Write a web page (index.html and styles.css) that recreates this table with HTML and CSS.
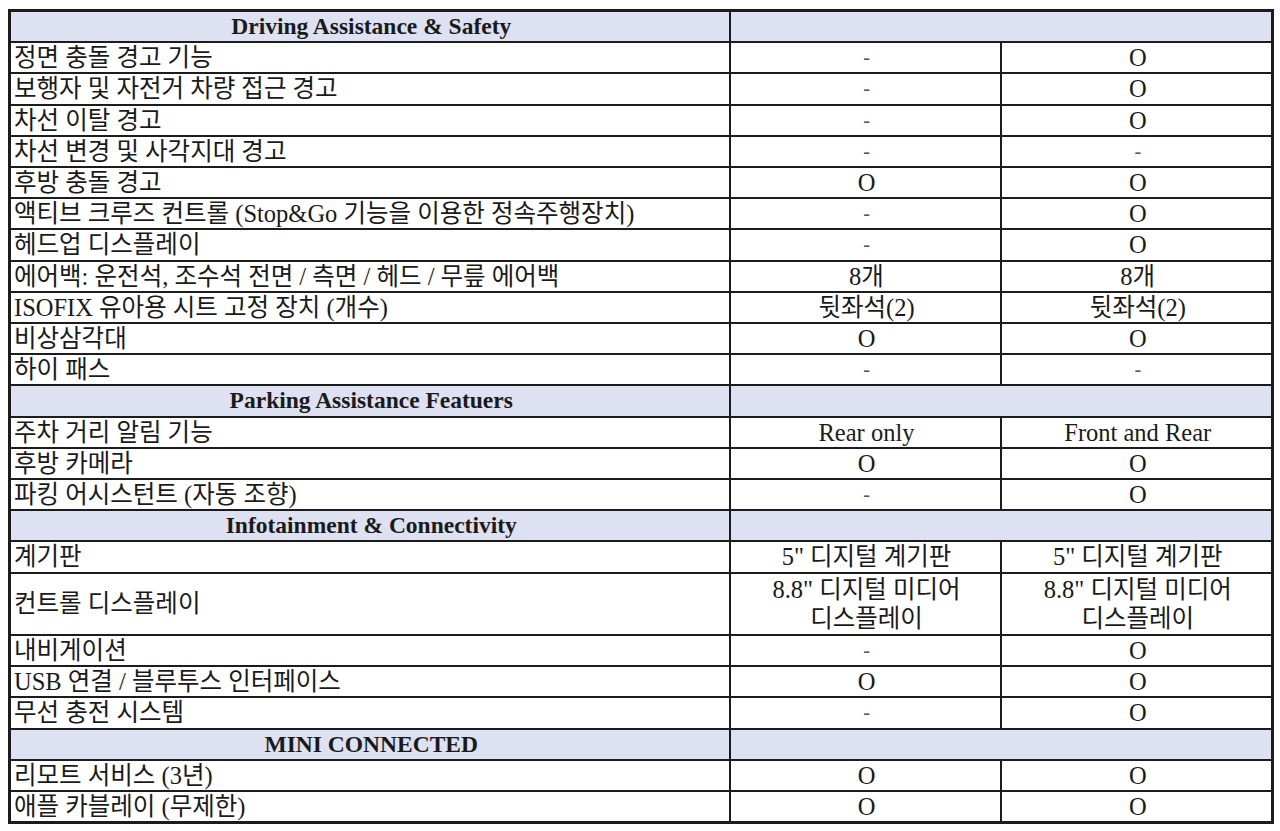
FILE: index.html
```html
<!DOCTYPE html>
<html lang="ko">
<head>
<meta charset="utf-8">
<link rel="stylesheet" href="styles.css">
</head>
<body>
<div class="wrap">
<table class="spec">
  <colgroup><col class="c1"><col class="c2"><col class="c3"></colgroup>
  <tbody>
    <tr class="sec"><td>Driving Assistance &amp; Safety</td><td colspan="2"></td></tr>
    <tr><td>정면 충돌 경고 기능</td><td class="dash">-</td><td>O</td></tr>
    <tr><td>보행자 및 자전거 차량 접근 경고</td><td class="dash">-</td><td>O</td></tr>
    <tr><td>차선 이탈 경고</td><td class="dash">-</td><td>O</td></tr>
    <tr><td>차선 변경 및 사각지대 경고</td><td class="dash">-</td><td class="dash">-</td></tr>
    <tr><td>후방 충돌 경고</td><td>O</td><td>O</td></tr>
    <tr><td>액티브 크루즈 컨트롤 (Stop&amp;Go 기능을 이용한 정속주행장치)</td><td class="dash">-</td><td>O</td></tr>
    <tr><td>헤드업 디스플레이</td><td class="dash">-</td><td>O</td></tr>
    <tr><td>에어백: 운전석, 조수석 전면 / 측면 / 헤드 / 무릎 에어백</td><td>8개</td><td>8개</td></tr>
    <tr><td>ISOFIX 유아용 시트 고정 장치 (개수)</td><td>뒷좌석(2)</td><td>뒷좌석(2)</td></tr>
    <tr><td>비상삼각대</td><td>O</td><td>O</td></tr>
    <tr><td>하이 패스</td><td class="dash">-</td><td class="dash">-</td></tr>
    <tr class="sec"><td>Parking Assistance Featuers</td><td colspan="2"></td></tr>
    <tr><td>주차 거리 알림 기능</td><td>Rear only</td><td>Front and Rear</td></tr>
    <tr><td>후방 카메라</td><td>O</td><td>O</td></tr>
    <tr><td>파킹 어시스턴트 (자동 조향)</td><td class="dash">-</td><td>O</td></tr>
    <tr class="sec"><td>Infotainment &amp; Connectivity</td><td colspan="2"></td></tr>
    <tr><td>계기판</td><td>5" 디지털 계기판</td><td>5" 디지털 계기판</td></tr>
    <tr class="tall"><td>컨트롤 디스플레이</td><td>8.8" 디지털 미디어<br>디스플레이</td><td>8.8" 디지털 미디어<br>디스플레이</td></tr>
    <tr><td>내비게이션</td><td class="dash">-</td><td>O</td></tr>
    <tr><td>USB 연결 / 블루투스 인터페이스</td><td>O</td><td>O</td></tr>
    <tr><td>무선 충전 시스템</td><td class="dash">-</td><td>O</td></tr>
    <tr class="sec"><td>MINI CONNECTED</td><td colspan="2"></td></tr>
    <tr><td>리모트 서비스 (3년)</td><td>O</td><td>O</td></tr>
    <tr><td>애플 카블레이 (무제한)</td><td>O</td><td>O</td></tr>
  </tbody>
</table>
</div>
</body>
</html>
```
FILE: styles.css
```css
html, body {
  margin: 0;
  padding: 0;
  background: #ffffff;
}
.wrap {
  padding: 9px 0 0 8px;
}
.spec {
  border-collapse: collapse;
  width: 1263px;
  table-layout: fixed;
  border: 3px solid #1c1c1c;
  font-family: "Liberation Serif", "Noto Sans CJK KR", serif;
  font-size: 24.5px;
  color: #1a1a1a;
}
.c1 { width: 720px; }
.c2 { width: 271px; }
.c3 { width: 272px; }
.spec td {
  border: 2px solid #1c1c1c;
  padding: 0 0 0 3px;
  height: 29.2px;
  line-height: 29.2px;
  white-space: nowrap;
  vertical-align: middle;
  text-align: center;
  overflow: hidden;
}
.spec td:first-child {
  text-align: left;
}
.spec .sec td {
  background: #dde1f1;
  font-weight: bold;
  font-size: 23.5px;
}
.spec .sec td:first-child {
  text-align: center;
}
.spec .tall td {
  height: 60.4px;
}
.spec .dash {
  color: #555555;
  font-size: 20px;
}
```
